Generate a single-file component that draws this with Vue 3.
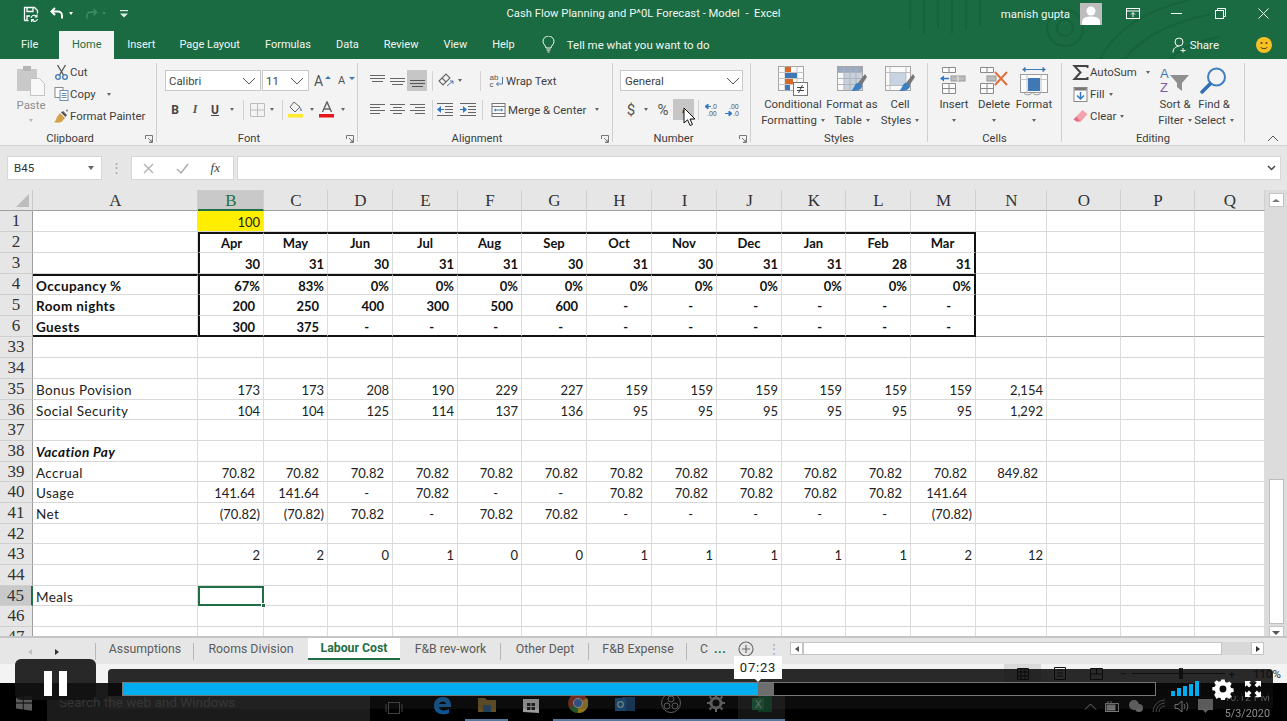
<script setup>
const cols = ['A','B','C','D','E','F','G','H','I','J','K','L','M','N','O','P','Q']
const months = ['Apr','May','Jun','Jul','Aug','Sep','Oct','Nov','Dec','Jan','Feb','Mar']
const days = [30,31,30,31,31,30,31,30,31,31,28,31].map(String)
const pct = ['67%','83%','0%','0%','0%','0%','0%','0%','0%','0%','0%','0%']
const d = '-'
const v = '70.82', w = '141.64', n = '(70.82)'

const rowsRaw = [
  { n: 1, vals: ['100'], plain: true },
  { n: 2, vals: months, center: true, bold: true },
  { n: 3, vals: days, plain: true, bold: true },
  { n: 4, a: 'Occupancy %', vals: pct, plain: true, bold: true },
  { n: 5, a: 'Room nights', vals: ['200','250','400','300','500','600',d,d,d,d,d,d], bold: true },
  { n: 6, a: 'Guests', vals: ['300','375',d,d,d,d,d,d,d,d,d,d], bold: true },
  { n: 33, vals: [] },
  { n: 34, vals: [] },
  { n: 35, a: 'Bonus Povision', vals: ['173','173','208','190','229','227','159','159','159','159','159','159','2,154'], plain: true },
  { n: 36, a: 'Social Security', vals: ['104','104','125','114','137','136','95','95','95','95','95','95','1,292'], plain: true },
  { n: 37, vals: [] },
  { n: 38, a: 'Vacation Pay', aClass: 'bi', vals: [] },
  { n: 39, a: 'Accrual', vals: [v,v,v,v,v,v,v,v,v,v,v,v,'849.82'] },
  { n: 40, a: 'Usage', vals: [w,w,d,v,d,d,v,v,v,v,v,w] },
  { n: 41, a: 'Net', vals: [n,n,v,d,v,v,d,d,d,d,d,n] },
  { n: 42, vals: [] },
  { n: 43, vals: ['2','2','0','1','0','0','1','1','1','1','1','2','12'], plain: true },
  { n: 44, vals: [] },
  { n: 45, a: 'Meals', vals: [] },
  { n: 46, vals: [] },
  { n: 47, vals: [] },
]

function cellClass(row, ci) {
  const out = []
  const val = ci > 0 ? row.vals[ci - 1] : undefined
  if (ci === 0) {
    out.push('txt')
    if (row.bold) out.push('b')
    if (row.aClass) out.push(row.aClass)
  } else if (val !== undefined) {
    if (row.bold) out.push('b')
    if (row.center) out.push('ctr')
    else if (row.plain) out.push('rgt')
    else if (val === d) out.push('rgt', 'dash')
    else if (val.startsWith('(')) out.push('rgt')
    else out.push('rgt', 'acc')
  }
  const inBox = ci >= 1 && ci <= 12
  if (row.n === 2 && inBox) out.push('tt')
  if (row.n === 4 && ci <= 12) out.push('tt')
  if (row.n === 6 && ci <= 12) out.push('tb')
  if (row.n === 6 && ci > 12) out.push('gb')
  if (row.n >= 2 && row.n <= 6 && ci === 1) out.push('tl')
  if (row.n >= 2 && row.n <= 6 && ci === 12) out.push('tr')
  if (row.n === 1 && ci === 1) out.push('yellow')
  if (row.n === 45 && ci === 1) out.push('sel')
  return out
}

const rows = rowsRaw.map(r => ({
  n: r.n,
  active: r.n === 45,
  cells: cols.map((c, i) => ({
    key: c,
    text: i === 0 ? (r.a || '') : (r.vals[i - 1] || ''),
    cls: cellClass(r, i),
  })),
}))

const sheetTabs = [
  { label: 'Assumptions', w: 'tw-a' },
  { label: 'Rooms Division', w: 'tw-b' },
  { label: 'Labour Cost', w: 'tw-c', on: true },
  { label: 'F&B rev-work', w: 'tw-d' },
  { label: 'Other Dept', w: 'tw-e' },
  { label: 'F&B Expense', w: 'tw-a' },
]
const ribbonTabs = [
  ['File','t-file'],['Home','t-home'],['Insert','t-ins'],['Page Layout','t-pl'],['Formulas','t-for'],
  ['Data','t-dat'],['Review','t-rev'],['View','t-vie'],['Help','t-hel'],
]
const taskSlots = [
  { id: 'view', w: 48 }, { id: 'edge', w: 47 }, { id: 'files', w: 43, run: true }, { id: 'store', w: 45 },
  { id: 'chrome', w: 49, run: true }, { id: 'outlook', w: 46, run: true }, { id: 'obs', w: 45, run: true },
  { id: 'gear', w: 45, run: true }, { id: 'excel', w: 47, run: true, hot: true },
]
const bars = [5, 8, 10, 12.5, 15]
</script>

<template>
  <div class="app">
    <div class="window">
      <div class="head">
        <svg class="swirl" width="340" height="59" viewBox="0 0 340 59" fill="none" stroke="#17623c" stroke-width="2">
          <circle cx="165" cy="28" r="18"/><circle cx="165" cy="28" r="8"/>
          <path d="M200 59C215 30 245 10 290 0M225 59c15-20 40-35 85-45M270 59c10-10 25-18 50-22"/>
          <path d="M10 0v30M24 0v34M38 0v28M52 0v34M66 0v30M80 0v26"/>
        </svg>
        <header class="titlebar">
          <div class="qat">
            <svg class="qi-save" width="16" height="16" viewBox="0 0 16 16" fill="none" stroke="#fff" stroke-width="1.3"><path d="M1.5 14.5v-13h10l3 3v3"/><path d="M4 1.5v4h6v-4M1.5 14.5h4M4 14v-4h3"/><path d="M8 12a3 3 0 0 1 5-2l1 1m0-2.5V11h-2.4M14.5 13a3 3 0 0 1-5 1.500l-1-1m0 2.400v-2.400H11" stroke-width="1.100"/></svg>
            <svg class="qi-undo" width="14" height="13" viewBox="0 0 14 13" fill="none" stroke="#fff" stroke-width="2"><path d="M5 1 1.500 4.500 5 8"/><path d="M2 4.500h6a4 4 0 0 1 4 4v3"/></svg>
            <i class="caret white qc1"></i>
            <svg class="qi-redo" width="13" height="12" viewBox="0 0 14 13" fill="none" stroke="#3f8a66" stroke-width="1.700"><path d="M9 1l3.500 3.500L9 8"/><path d="M12 4.500H6a4 4 0 0 0-4 4v3"/></svg>
            <i class="caret dim qc2"></i>
            <svg class="qi-cust" width="10" height="8" viewBox="0 0 10 8" fill="#dfeee6"><rect x="1" y="0" width="8" height="1.200"/><path d="M1 3.500h8L5 7.500z"/></svg>
          </div>
          <div class="doc-title">Cash Flow Planning and P^0L Forecast - Model&nbsp; -&nbsp; Excel</div>
          <div class="win-right">
            <span class="user">manish gupta</span>
            <span class="avatar">
              <svg width="22" height="22" viewBox="0 0 22 22" fill="#fff"><circle cx="11" cy="8" r="4.500"/><path d="M2 22v-3c0-4 4-5.500 9-5.500s9 1.500 9 5.500v3z"/></svg>
            </span>
            <svg class="wc wc1" width="14" height="12" viewBox="0 0 14 12" fill="none" stroke="#fff"><rect x=".5" y=".5" width="13" height="10"/><path d="M.5 3h13M7 9V5M5 6.500 7 4.500l2 2"/></svg>
            <svg class="wc wc2" width="11" height="11" viewBox="0 0 11 11" stroke="#fff"><path d="M0 5.500h11"/></svg>
            <svg class="wc wc3" width="11" height="11" viewBox="0 0 11 11" fill="none" stroke="#fff"><rect x=".5" y="2.500" width="8" height="8"/><path d="M2.500 2.500v-2h8v8h-2"/></svg>
            <svg class="wc wc4" width="11" height="11" viewBox="0 0 11 11" stroke="#fff"><path d="M.5.5l10 10M10.500.5l-10 10"/></svg>
          </div>
        </header>

        <nav class="tabs">
          <span v-for="t in ribbonTabs" :key="t[0]" class="tab" :class="t[1]">{{ t[0] }}</span>
          <svg class="bulb" width="13" height="17" viewBox="0 0 13 17" fill="none" stroke="#fff"><path d="M4 12c0-2.500-3-3.500-3-6.500a5.500 5.500 0 0 1 11 0C12 8.500 9 9.500 9 12z"/><path d="M4.500 14h4M5.500 16h2"/></svg>
          <span class="tell">Tell me what you want to do</span>
          <span class="share">
            <svg width="15" height="16" viewBox="0 0 15 16" fill="none" stroke="#fff"><circle cx="7" cy="5" r="4"/><path d="M1 15.500c0-4 2.500-6 5.500-6M11 11v4.500M8.500 13.500h5"/></svg>
            Share
          </span>
          <span class="smiley">
            <svg width="16" height="16" viewBox="0 0 16 16"><circle cx="8" cy="8" r="8" fill="#f6c125"/><circle cx="5.500" cy="6" r="1.100" fill="#5a4510"/><circle cx="10.500" cy="6" r="1.100" fill="#5a4510"/><path d="M4.500 10c1.500 2.200 5.500 2.200 7 0" fill="none" stroke="#5a4510"/></svg>
          </span>
        </nav>
      </div>

      <section class="ribbon">
        <!-- Clipboard -->
        <div class="group g-clip">
          <div class="gbody">
            <div class="paste">
              <svg width="28" height="30" viewBox="0 0 28 30"><rect x="0" y="3" width="20" height="22" fill="#c9c9c9"/><rect x="6" y="0" width="8" height="5" fill="#b5b5b5"/><path d="M13.500 12.500h9l5 5v12h-14z" fill="#f8f8f8" stroke="#c4c4c4"/></svg>
              <span class="paste-l">Paste</span>
              <i class="caret soft"></i>
            </div>
            <div class="smalls">
              <div class="small">
                <svg width="14" height="16" viewBox="0 0 14 16" fill="none"><path d="M3 1l6 10M11 1 5 11" stroke="#555" stroke-width="1.300"/><circle cx="3.500" cy="13" r="2.300" stroke="#3f78b5" stroke-width="1.300"/><circle cx="10.500" cy="13" r="2.300" stroke="#3f78b5" stroke-width="1.300"/></svg>
                <span>Cut</span>
              </div>
              <div class="small">
                <svg width="14" height="14" viewBox="0 0 14 14" fill="#fff" stroke="#8a8a8a"><rect x=".5" y=".5" width="8" height="10"/><rect x="5.500" y="3.500" width="8" height="10" stroke="#6b8fb5"/><path d="M7 6.500h5M7 8.500h5M7 10.500h5" stroke="#6b8fb5"/></svg>
                <span>Copy</span><i class="caret ml-copy"></i>
              </div>
              <div class="small">
                <svg width="15" height="14" viewBox="0 0 15 14"><path d="M6 4l5 5-3 3.500C6 14 2 14 0 13c2-1 2-3 3-5z" fill="#d2a24d"/><path d="M7 3.500l2-1.500 4 4-1.500 2z" fill="#555"/><circle cx="13" cy="1.500" r="1" fill="#777"/></svg>
                <span>Format Painter</span>
              </div>
            </div>
          </div>
          <div class="glabel off">Clipboard<svg class="launch" width="8" height="8" viewBox="0 0 8 8" fill="none" stroke="#777"><path d="M.5 4V.5h7v7H4M3 3l4 4M7 4.500V7H4.500"/></svg></div>
        </div>
        <i class="vsep"></i>

        <!-- Font -->
        <div class="group g-font">
          <div class="gbody col">
            <div class="rowline">
              <div class="combo c-font"><span>Calibri</span><svg width="14" height="8" viewBox="0 0 14 8" fill="none" stroke="#555"><path d="M1 1l6 6 6-6"/></svg></div>
              <div class="combo c-size"><span>11</span><svg width="14" height="8" viewBox="0 0 14 8" fill="none" stroke="#555"><path d="M1 1l6 6 6-6"/></svg></div>
              <span class="grow-a">A<i class="tri up"></i></span>
              <span class="shrink-a">A<i class="tri dn"></i></span>
            </div>
            <div class="rowline r2">
              <span class="slot s20 fb">B</span>
              <span class="slot s20 fi">I</span>
              <span class="slot s20 fu">U</span>
              <span class="slot s13"><i class="caret"></i></span>
              <i class="msep m5"></i>
              <span class="slot s20 mlx3">
                <svg width="15" height="14" viewBox="0 0 15 14" fill="none" stroke="#bdbdbd"><path d="M.5.5h14v13H.5zM7.500.5v13M.5 7h14"/></svg>
              </span>
              <span class="slot s10"><i class="caret"></i></span>
              <i class="msep m5"></i>
              <span class="slot s20 mlx3">
                <svg width="16" height="17" viewBox="0 0 16 17"><path d="M6 1l6 5-5 5-5-5z" fill="#f3f3f3" stroke="#666"/><path d="M12 6c2 2 2.500 3.500 1.500 4-1 .5-2-.5-1.500-4" fill="#7a94c4"/><rect x="0" y="13" width="15" height="3.500" fill="#ffe92b"/></svg>
              </span>
              <span class="slot s11"><i class="caret"></i></span>
              <span class="slot s20">
                <svg width="16" height="17" viewBox="0 0 16 17"><path d="M3.500 11 8 1l4.500 10M5 8h6" fill="none" stroke="#666" stroke-width="1.500"/><rect x="0" y="13" width="15" height="3.500" fill="#e8141c"/></svg>
              </span>
              <span class="slot s11"><i class="caret"></i></span>
            </div>
          </div>
          <div class="glabel off">Font<svg class="launch" width="8" height="8" viewBox="0 0 8 8" fill="none" stroke="#777"><path d="M.5 4V.5h7v7H4M3 3l4 4M7 4.500V7H4.500"/></svg></div>
        </div>
        <i class="vsep"></i>

        <!-- Alignment -->
        <div class="group g-align">
          <div class="gbody col">
            <div class="rowline">
              <span class="slot s20 first">
                <svg width="15" height="12" viewBox="0 0 15 12" stroke="#666"><path d="M0 .5h15M0 3.500h15M2 6.500h11"/></svg>
              </span>
              <span class="slot s20">
                <svg width="15" height="12" viewBox="0 0 15 12" stroke="#666"><path d="M0 3.500h15M0 6.500h15M2 9.500h11"/></svg>
              </span>
              <span class="slot s20 hot">
                <svg width="15" height="12" viewBox="0 0 15 12" stroke="#555"><path d="M0 5.500h15M0 8.500h15M2 11.500h11"/></svg>
              </span>
              <i class="msep m5"></i>
              <span class="slot s20 mlx3">
                <svg width="18" height="15" viewBox="0 0 18 15" fill="none" stroke="#666"><path d="M2 8 9 1l4 4-7 7zM5 5l4 4" stroke-width="1.100"/><path d="M10 13l6-5m-3 0h3v3" stroke="#4d78ad"/></svg>
              </span>
              <span class="slot s10 shiftl"><i class="caret"></i></span>
              <i class="msep wrapgap"></i>
              <div class="small inl">
                <svg width="14" height="15" viewBox="0 0 14 15"><text x="0" y="7" font-size="8" fill="#555" font-family="Liberation Sans, sans-serif">ab</text><text x="0" y="14" font-size="8" fill="#555" font-family="Liberation Sans, sans-serif">c</text><path d="M13 4v7H7l2-2m-2 2 2 2" fill="none" stroke="#4d78ad"/></svg>
                <span>Wrap Text</span>
              </div>
            </div>
            <div class="rowline r2">
              <span class="slot s20 first">
                <svg width="15" height="12" viewBox="0 0 15 12" stroke="#666"><path d="M0 .5h15M0 3.500h10M0 6.500h15M0 9.500h10"/></svg>
              </span>
              <span class="slot s20">
                <svg width="15" height="12" viewBox="0 0 15 12" stroke="#666"><path d="M0 .5h15M3 3.500h9M0 6.500h15M3 9.500h9"/></svg>
              </span>
              <span class="slot s20">
                <svg width="15" height="12" viewBox="0 0 15 12" stroke="#666"><path d="M0 .5h15M5 3.500h10M0 6.500h15M5 9.500h10"/></svg>
              </span>
              <i class="msep m5"></i>
              <span class="slot s20 mlx2">
                <svg width="16" height="13" viewBox="0 0 16 13" stroke="#666"><path d="M0 .5h16M8 3.500h8M8 6.500h8M8 9.500h8M0 12.500h16"/><path d="M0 6.500 4 3v7z" fill="#2f77c8" stroke="none"/><path d="M3 6.500h4" stroke="#2f77c8"/></svg>
              </span>
              <span class="slot s20 mlx3">
                <svg width="16" height="13" viewBox="0 0 16 13" stroke="#666"><path d="M0 .5h16M8 3.500h8M8 6.500h8M8 9.500h8M0 12.500h16"/><path d="M7 6.500 3 3v7z" fill="#2f77c8" stroke="none"/><path d="M0 6.500h4" stroke="#2f77c8"/></svg>
              </span>
              <i class="msep mergegap"></i>
              <div class="small inl">
                <svg width="14" height="14" viewBox="0 0 14 14" fill="#fbfbfb" stroke="#777"><rect x=".5" y=".5" width="13" height="13"/><path d="M.5 3.500h13M.5 10.500h13"/><path d="M3 7h8M3 7l1.500-1.200M3 7l1.500 1.200M11 7 9.500 5.800M11 7 9.500 8.200" stroke="#3f78b5"/></svg>
                <span>Merge &amp; Center</span><i class="caret ml-merge"></i>
              </div>
            </div>
          </div>
          <div class="glabel off">Alignment<svg class="launch" width="8" height="8" viewBox="0 0 8 8" fill="none" stroke="#777"><path d="M.5 4V.5h7v7H4M3 3l4 4M7 4.500V7H4.500"/></svg></div>
        </div>
        <i class="vsep"></i>

        <!-- Number -->
        <div class="group g-num">
          <div class="gbody col">
            <div class="rowline">
              <div class="combo c-gen"><span>General</span><svg width="14" height="8" viewBox="0 0 14 8" fill="none" stroke="#555"><path d="M1 1l6 6 6-6"/></svg></div>
            </div>
            <div class="rowline r2">
              <span class="slot s20 n1 big">$</span>
              <span class="slot s10"><i class="caret"></i></span>
              <span class="slot s20 n2 big">%</span>
              <span class="slot s21 hot comma">,</span>
              <i class="msep m4"></i>
              <span class="slot s20 n3">
                <svg width="15" height="14" viewBox="0 0 15 14"><path d="M0 3.500 3 1v5zM3 3.500h3" fill="#2f77c8" stroke="#2f77c8"/><text x="6" y="6" font-size="7" fill="#555" font-family="Liberation Sans, sans-serif">.0</text><text x="2" y="13" font-size="7" fill="#555" font-family="Liberation Sans, sans-serif">.00</text></svg>
              </span>
              <span class="slot s21">
                <svg width="15" height="14" viewBox="0 0 15 14"><text x="4" y="6" font-size="7" fill="#555" font-family="Liberation Sans, sans-serif">.00</text><path d="M0 10.500h4M7 10.500l-3-2.500v5z" fill="#2f77c8" stroke="#2f77c8"/><text x="8" y="13" font-size="7" fill="#555" font-family="Liberation Sans, sans-serif">.0</text></svg>
              </span>
            </div>
          </div>
          <div class="glabel off">Number<svg class="launch" width="8" height="8" viewBox="0 0 8 8" fill="none" stroke="#777"><path d="M.5 4V.5h7v7H4M3 3l4 4M7 4.500V7H4.500"/></svg></div>
        </div>
        <i class="vsep"></i>

        <!-- Styles -->
        <div class="group g-styles">
          <div class="gbody">
            <div class="bigbtn b-cf">
              <svg width="30" height="30" viewBox="0 0 30 30" fill="none"><rect x=".5" y=".5" width="25" height="24" fill="#fafafa" stroke="#a5a5a5"/><path d="M.5 6.500h25M.5 12.500h25M.5 18.500h25M7 .5v24M19 .5v24" stroke="#c4c4c4"/><rect x="7" y="1" width="6" height="5" fill="#d8672a"/><rect x="7" y="7" width="12" height="5" fill="#3f78b5"/><rect x="7" y="13" width="8" height="5" fill="#d8672a"/><rect x="7" y="19" width="5" height="5" fill="#3f78b5"/><rect x="15.500" y="16.500" width="14" height="13" fill="#fff" stroke="#777"/><path d="M19 21.500h7M19 24.500h7M24.500 19l-4 8" stroke="#444"/></svg>
              <span>Conditional</span><span>Formatting<i class="caret ml3"></i></span>
            </div>
            <div class="bigbtn b-ft">
              <svg width="30" height="30" viewBox="0 0 30 30" fill="none"><rect x=".5" y=".5" width="25" height="24" fill="#fafafa" stroke="#a5a5a5"/><rect x="1" y="1" width="24" height="5" fill="#9aa9bd"/><rect x="7" y="6" width="18" height="18" fill="#c7d0db"/><path d="M.5 6.500h25M.5 12.500h25M.5 18.500h25M7 .5v24M13 .5v24M19 .5v24" stroke="#aeb4bb"/><path d="M28 8 21 17l3 3 6-9z" fill="#777"/><path d="M20 17c3-.5 5 1 5 3.500-1 3.500-6 5-11 4.500 3-2 3-6 6-8z" fill="#3f7fc0"/></svg>
              <span>Format as</span><span>Table<i class="caret ml3"></i></span>
            </div>
            <div class="bigbtn b-cs">
              <svg width="30" height="30" viewBox="0 0 30 30" fill="none"><rect x=".5" y=".5" width="25" height="24" fill="#fafafa" stroke="#a5a5a5"/><rect x="5" y="7" width="16" height="12" fill="#c5d3e2"/><path d="M.5 6.500h25M5 .5v24M21 .5v24M.5 19.500h25" stroke="#bdbdbd"/><path d="M28 8 21 17l3 3 6-9z" fill="#777"/><path d="M20 17c3-.5 5 1 5 3.500-1 3.500-6 5-11 4.500 3-2 3-6 6-8z" fill="#3f7fc0"/></svg>
              <span>Cell</span><span>Styles<i class="caret ml3"></i></span>
            </div>
          </div>
          <div class="glabel">Styles</div>
        </div>
        <i class="vsep"></i>

        <!-- Cells -->
        <div class="group g-cells">
          <div class="gbody">
            <div class="bigbtn b-cell">
              <svg width="30" height="30" viewBox="0 0 30 30" fill="none"><path d="M3.500 1.500h13v5h-13zM10 1.500v5M3.500 17.500h13v10h-13zM3.500 22.500h13M10 17.500v10" stroke="#8a8a8a" fill="#fbfbfb"/><rect x="12" y="10" width="14" height="5" fill="#bcbcbc" stroke="#999"/><path d="M19 10v5" stroke="#eee"/><path d="M2 12.500h8" stroke="#2f77c8" stroke-width="1.500"/><path d="M1 12.500 5 9.500v6z" fill="#2f77c8"/></svg>
              <span>Insert</span><i class="caret top5"></i>
            </div>
            <div class="bigbtn b-cell">
              <svg width="30" height="30" viewBox="0 0 30 30" fill="none"><path d="M1.500 1.500h13v5h-13zM8 1.500v5M1.500 17.500h13v10h-13zM1.500 22.500h13M8 17.500v10" stroke="#8a8a8a" fill="#fbfbfb"/><rect x="8" y="10" width="9" height="5" fill="#bcbcbc" stroke="#999"/><path d="M16 6l12 13M28 6 16 19" stroke="#e0703a" stroke-width="2"/></svg>
              <span>Delete</span><i class="caret top5"></i>
            </div>
            <div class="bigbtn b-cell">
              <svg width="30" height="30" viewBox="0 0 30 30" fill="none"><path d="M6 3.500h18M6 1v5M24 1v5" stroke="#3f78b5"/><path d="M3 3.500 6 1.500v4zM27 3.500 24 1.500v4z" fill="#3f78b5"/><rect x="1.500" y="8.500" width="27" height="18" fill="#fbfbfb" stroke="#9a9a9a"/><path d="M1.500 13.500h27M8 8.500v18M22 8.500v18" stroke="#c4c4c4"/><rect x="9" y="12" width="12" height="13" fill="#3f78b5"/><path d="M5 26.500c0 3 7 3 8 0M14 26.500c0 3 7 3 8 0" stroke="#9a9a9a"/></svg>
              <span>Format</span><i class="caret top5"></i>
            </div>
          </div>
          <div class="glabel">Cells</div>
        </div>
        <i class="vsep"></i>

        <!-- Editing -->
        <div class="group g-edit">
          <div class="gbody">
            <div class="smalls edit-col">
              <div class="small">
                <svg width="16" height="15" viewBox="0 0 16 15" fill="none" stroke="#444" stroke-width="2"><path d="M15 3V1H2l6 6.500L2 14h13v-2"/></svg>
                <span>AutoSum</span><i class="caret ml-auto"></i>
              </div>
              <div class="small">
                <svg width="14" height="15" viewBox="0 0 14 15" fill="#fff" stroke="#888"><rect x=".5" y=".5" width="13" height="14"/><rect x="1" y="1" width="12" height="2.500" fill="#777" stroke="none"/><path d="M7 5v7M3.500 8.500 7 12l3.500-3.500" stroke="#2f77c8" fill="none" stroke-width="1.500"/></svg>
                <span>Fill</span><i class="caret ml3"></i>
              </div>
              <div class="small">
                <svg width="14" height="13" viewBox="0 0 14 13"><path d="M9 0l5 4-7 8H3L0 9.500z" fill="#f2a3ad"/><path d="M3 6.500 6.500 11H3L0 9.500z" fill="#e56d84"/></svg>
                <span>Clear</span><i class="caret ml3"></i>
              </div>
            </div>
            <div class="bigbtn b-sort">
              <svg width="30" height="30" viewBox="0 0 30 30"><text x="0" y="12" font-size="13" fill="#3f78b5" font-family="Liberation Sans, sans-serif">A</text><text x="0" y="26" font-size="13" fill="#7a5ba6" font-family="Liberation Sans, sans-serif">Z</text><path d="M10 9h19l-7 8v8l-5-4v-4z" fill="#8f8f8f"/></svg>
              <span>Sort &amp;</span><span>Filter<i class="caret ml3"></i></span>
            </div>
            <div class="bigbtn b-find">
              <svg width="30" height="30" viewBox="0 0 30 30" fill="none"><circle cx="17.500" cy="11" r="8.500" stroke="#3f7fc0" stroke-width="2"/><path d="M11 18 3 26" stroke="#2f6fb5" stroke-width="3.500" stroke-linecap="round"/></svg>
              <span>Find &amp;</span><span>Select<i class="caret ml3"></i></span>
            </div>
          </div>
          <div class="glabel">Editing</div>
        </div>
        <i class="vsep"></i>
        <div class="collapse">
          <svg width="12" height="7" viewBox="0 0 12 7" fill="none" stroke="#555"><path d="M1 6l5-5 5 5"/></svg>
        </div>
      </section>

      <div class="formula">
        <div class="namebox"><span>B45</span><i class="caret dark"></i></div>
        <span class="fdots">⋮</span>
        <div class="fbtns">
          <svg width="11" height="11" viewBox="0 0 11 11" stroke="#b0b0b0" stroke-width="1.300"><path d="M1 1l9 9M10 1l-9 9"/></svg>
          <svg width="13" height="11" viewBox="0 0 13 11" fill="none" stroke="#b0b0b0" stroke-width="1.500"><path d="M1 6l4 4 7-9"/></svg>
          <span class="fx">fx</span>
        </div>
        <div class="finput">
          <svg width="9" height="6" viewBox="0 0 9 6" fill="none" stroke="#444" stroke-width="1.500"><path d="M1 1l3.500 3.500L8 1"/></svg>
        </div>
      </div>

      <div class="sheet">
        <div class="grid">
          <div class="corner"><i></i></div>
          <div v-for="c in cols" :key="c" class="colh" :class="{ on: c === 'B' }">{{ c }}</div>
          <template v-for="r in rows" :key="r.n">
            <div class="rowh" :class="{ on: r.active }">{{ r.n }}</div>
            <div v-for="cell in r.cells" :key="cell.key" class="cell" :class="cell.cls">{{ cell.text }}</div>
          </template>
        </div>
        <aside class="vscroll">
          <span class="sbtn"><i class="tri up gr"></i></span>
          <span class="thumb"></span>
          <span class="sbtn"><i class="tri dn dk"></i></span>
        </aside>
      </div>

      <div class="sheettabs">
        <div class="navarrows"><i class="tri lf lite"></i><i class="tri rt dk"></i></div>
        <div v-for="t in sheetTabs" :key="t.label" class="stab" :class="[t.w, { on: t.on }]">{{ t.label }}</div>
        <div class="stab-more"><span>C</span><b>...</b></div>
        <svg class="plus" width="16" height="16" viewBox="0 0 16 16" fill="none" stroke="#6c6c6c" stroke-width="1.200"><circle cx="8" cy="8" r="7"/><path d="M8 4v8M4 8h8"/></svg>
        <span class="tdots">⋮</span>
        <div class="hscroll">
          <span class="hbtn"><i class="tri lf dk"></i></span>
          <span class="hthumb"></span>
          <span class="hbtn hr"><i class="tri rt dk"></i></span>
        </div>
      </div>

      <footer class="status">
        <span class="sv on"><svg width="12" height="12" viewBox="0 0 12 12" fill="none" stroke="#111"><path d="M.5.500h11v11H.5zM.5 4h11M.5 8h11M4 .5v11M8 .5v11"/></svg></span>
        <span class="sv"><svg width="12" height="13" viewBox="0 0 12 13" fill="none" stroke="#111"><path d="M.5.500h11v12H.5zM3 3h6M3 6h6M3 9h6"/></svg></span>
        <span class="sv"><svg width="13" height="12" viewBox="0 0 13 12" fill="none" stroke="#111"><path d="M.5.500h12v11H.5zM.5 6h12M6.500.5V6"/></svg></span>
        <span class="zoomm">−</span>
        <span class="slider"><i></i></span>
        <span class="zoomp">+</span>
        <span class="zoomv">110%</span>
      </footer>

      <div class="taskbar">
        <svg class="winlogo" width="16" height="16" viewBox="0 0 16 16" fill="#5b5b5b"><path d="M0 2.500 6.800 1.600v6H0zM7.600 1.500 16 .3v7.300H7.600zM0 8.400h6.800v6L0 13.500zM7.600 8.400H16v7.300l-8.400-1.200z"/></svg>
        <div class="search">Search the web and Windows</div>
        <div v-for="s in taskSlots" :key="s.id" class="tslot" :class="{ run: s.run, hot: s.hot }" :style="{ width: s.w + 'px' }">
          <svg v-if="s.id === 'view'" width="20" height="14" viewBox="0 0 20 14" fill="none" stroke="#5a5a5a"><rect x="4.500" y="1.500" width="11" height="11"/><path d="M2 3v8M18 3v8"/></svg>
          <svg v-else-if="s.id === 'edge'" width="20" height="20" viewBox="0 0 20 20"><path d="M2 11C2 5 6 2 11 2c5 0 8 3.500 8 8v2H7c.5 3.500 5 4.500 10 2v4c-7 3-15 .5-15-7zM7 9h7c0-3.500-6-3.500-7 0z" fill="#1477c9"/></svg>
          <svg v-else-if="s.id === 'files'" width="20" height="18" viewBox="0 0 20 18"><path d="M1 3h7l2 2h9v12H1z" fill="#8b6d2e"/><rect x="6" y="10" width="8" height="7" fill="#2c5a85"/></svg>
          <svg v-else-if="s.id === 'store'" width="20" height="20" viewBox="0 0 20 20"><path d="M2 4h16v14l-16-1z" fill="#d8d8d8"/><path d="M6 8h3.500v3H6zM10.500 8H14v3h-3.500zM6 12h3.500v3H6zM10.500 12H14v3h-3.500z" fill="#222"/></svg>
          <svg v-else-if="s.id === 'chrome'" width="20" height="20" viewBox="0 0 20 20"><circle cx="10" cy="10" r="10" fill="#a63a2c"/><path d="M10 10 1.500 15A10 10 0 0 0 10 20z" fill="#2d7a3e"/><path d="M10 10v10A10 10 0 0 0 19 5z" fill="#c9a227"/><circle cx="10" cy="10" r="4.500" fill="#4275c4" stroke="#ddd"/></svg>
          <svg v-else-if="s.id === 'outlook'" width="20" height="18" viewBox="0 0 20 18"><rect x="7" y="2" width="13" height="14" fill="#174a7c"/><rect x="0" y="3" width="11" height="13" fill="#1f5f9c"/><circle cx="5.500" cy="9.500" r="2.800" fill="none" stroke="#9cc" stroke-width="1.300"/></svg>
          <svg v-else-if="s.id === 'obs'" width="20" height="20" viewBox="0 0 20 20" fill="none" stroke="#8a8a8a"><circle cx="10" cy="10" r="9.500"/><circle cx="10" cy="6" r="3"/><circle cx="6" cy="13" r="3"/><circle cx="14" cy="13" r="3"/></svg>
          <svg v-else-if="s.id === 'gear'" width="20" height="20" viewBox="0 0 20 20" fill="none" stroke="#8d8d8d" stroke-width="3"><circle cx="10" cy="10" r="5"/><path d="M10 1v3M10 16v3M1 10h3M16 10h3M3.500 3.500l2 2M14.500 14.500l2 2M3.500 16.500l2-2M14.500 5.500l2-2" stroke-width="2"/></svg>
          <svg v-else width="20" height="18" viewBox="0 0 20 18"><rect x="6" y="1" width="14" height="16" fill="#14512f"/><rect x="0" y="3" width="12" height="12" fill="#1d6b40"/><text x="3" y="13" font-size="10" fill="#9dbba9" font-family="Liberation Sans, sans-serif">X</text></svg>
        </div>
        <div class="tray">
          <svg width="13" height="7" viewBox="0 0 13 7" fill="none" stroke="#7c7c7c"><path d="M1 6.500 6.500 1 12 6.500"/></svg>
          <svg width="15" height="11" viewBox="0 0 15 11" fill="none" stroke="#777"><rect x=".5" y="2.500" width="13" height="8"/><rect x="2" y="4" width="8" height="5" fill="#777"/><path d="M3 2V0M6 2V0"/></svg>
          <svg width="16" height="14" viewBox="0 0 16 14" fill="#666"><circle cx="6" cy="6" r="5"/><circle cx="11" cy="9" r="4"/></svg>
          <svg width="14" height="14" viewBox="0 0 14 14" fill="none" stroke="#4b4b4b"><path d="M1 13a12 12 0 0 1 12-12M4 13a9 9 0 0 1 9-9M7 13a6 6 0 0 1 6-6"/></svg>
          <svg width="16" height="13" viewBox="0 0 16 13" fill="none" stroke="#7c7c7c"><path d="M1 4.500h3l4-3.500v11L4 8.500H1zM10 4c1 1.500 1 3.500 0 5M12.500 2.500c1.700 2.500 1.700 5.500 0 8"/></svg>
          <svg width="15" height="15" viewBox="0 0 15 15" fill="#636363"><path d="M0 0h15v11h-5l-2.500 3L5 11H0z"/></svg>
          <div class="clock"><span>10:12 PM</span><span>5/3/2020</span></div>
        </div>
      </div>
    </div>

    <!-- Video player overlay -->
    <div class="pausebox"><i></i><i></i></div>
    <div class="player">
      <div class="player-top"></div>
      <div class="track">
        <span class="played"></span>
        <span class="buffered"></span>
      </div>
    </div>
    <div class="tip">07:23</div>
    <div class="signal"><i v-for="(h, i) in bars" :key="i" :style="{ height: h + 'px' }"></i></div>
    <svg class="p-gear" width="22" height="22" viewBox="0 0 22 22"><path fill="#fff" fill-rule="evenodd" d="M9 0h4l.6 3 2.200.9 2.600-1.700 2.800 2.800-1.700 2.600.9 2.200 3 .6v4l-3 .6-.9 2.200 1.700 2.600-2.800 2.800-2.600-1.700-2.200.9-.6 3H9l-.6-3-2.200-.9-2.600 1.700L.8 17.800l1.700-2.600-.9-2.200-3-.6V9l3-.6.9-2.200L.8 3.600 3.600.8l2.600 1.700L8.400 2zM11 7a4 4 0 1 0 0 8 4 4 0 0 0 0-8z" transform="translate(1.500 1.500) scale(.86)"/></svg>
    <svg class="p-full" width="16" height="16" viewBox="0 0 16 16" fill="#fff"><path d="M0 0h6L4.200 1.800 6.500 4 4 6.500 1.800 4.200 0 6zM16 0v6l-1.800-1.800L12 6.500 9.500 4l2.300-2.200L10 0zM0 16v-6l1.800 1.800L4 9.500 6.500 12l-2.300 2.200L6 16zM16 16h-6l1.800-1.800L9.500 12 12 9.500l2.200 2.300L16 10z"/></svg>
    <svg class="cursor" width="13" height="20" viewBox="0 0 13 20"><path d="M1 1v15l3.500-3.200L7 18.500l2.500-1-2.500-5.500h5z" fill="#fff" stroke="#111"/></svg>
  </div>
</template>

<style scoped>
.app { position: relative; width: 1287px; height: 721px; overflow: hidden; font-family: Roboto, "Open Sans", sans-serif; }
.window { display: flex; flex-direction: column; width: 1287px; height: 721px; filter: blur(.35px); background: #e6e6e6; }
i { display: block; font-style: normal; }

/* title bar */
.head { position: relative; background: #1a6a42; flex: none; }
.swirl { position: absolute; left: 900px; top: 0; }
.titlebar { height: 30px; display: grid; grid-template-columns: 1fr auto 1fr; align-items: center; color: #fff; position: relative; padding-bottom: 3px; box-sizing: border-box; }
.qat { display: flex; align-items: center; padding-left: 23px; }
.qi-undo { margin-left: 11px; }
.qc1 { margin-left: 5px; }
.qi-redo { margin-left: 12px; }
.qc2 { margin-left: 4px; }
.qi-cust { margin-left: 13px; }
.doc-title { font-size: 11.250px; color: #eef6f1; white-space: nowrap; }
.win-right { display: flex; align-items: center; justify-content: flex-end; }
.user { font-size: 11.400px; color: #eef6f1; margin-right: 10px; }
.avatar { width: 22px; height: 22px; background: #bdbdbd; overflow: hidden; margin-right: 24px; margin-top: 0; }
.wc { flex: none; }
.wc2 { margin-left: 31px; }
.wc3 { margin-left: 33px; }
.wc4 { margin-left: 32px; margin-right: 18px; }

/* ribbon tabs */
.tabs { height: 29px; display: flex; align-items: center; color: #f1f7f3; font-size: 11px; position: relative; }
.tab { white-space: nowrap; }
.t-file { margin-left: 21px; }
.t-home { margin-left: 21px; background: #f3f3f3; color: #1f6e45; width: 55px; height: 28px; margin-top: 1px; padding-bottom: 2px; box-sizing: border-box; display: flex; align-items: center; justify-content: center; }
.t-ins { margin-left: 13px; }
.t-pl { margin-left: 24px; }
.t-for { margin-left: 25px; }
.t-dat { margin-left: 25px; }
.t-rev { margin-left: 25px; }
.t-vie { margin-left: 25px; }
.t-hel { margin-left: 25px; }
.bulb { margin-left: 27px; }
.tell { margin-left: 12px; font-size: 11.500px; }
.share { margin-left: auto; display: flex; align-items: center; gap: 3px; margin-right: 37px; font-size: 11.500px; }
.smiley { display: flex; margin-right: 15px; }

/* ribbon */
.ribbon { height: 86px; background: #f3f3f3; border-bottom: 1px solid #d2d2d2; display: flex; flex: none; box-sizing: content-box; color: #444; font-size: 11.400px; }
.group { display: flex; flex-direction: column; flex: none; position: relative; }
.g-clip { width: 156px; }
.g-font { width: 200px; }
.g-align { width: 254px; }
.g-num { width: 137px; }
.g-styles { width: 176px; }
.g-cells { width: 133px; }
.g-edit { width: 182px; }
.vsep { width: 1px; background: #cfcfcf; margin: 4px 0 3px; flex: none; }
.gbody { flex: 1; display: flex; min-height: 0; }
.gbody.col { flex-direction: column; padding-top: 11px; }
.glabel { height: 14px; line-height: 16px; text-align: center; font-size: 11.200px; color: #3c3c3c; position: relative; }
.glabel.off { padding-right: 16px; }
.launch { position: absolute; right: 3px; top: 4px; }
.paste { margin-left: 16px; margin-top: 7px; width: 30px; display: flex; flex-direction: column; align-items: center; color: #8f8f8f; }
.paste-l { margin-top: 2px; line-height: 15px; }
.paste .caret { margin-top: 6px; }
.smalls { margin-left: 7px; padding-top: 2px; display: flex; flex-direction: column; }
.small { height: 22px; display: flex; align-items: center; white-space: nowrap; }
.small svg { flex: none; width: 17px; margin-right: 0; }
.small span { color: #3f3f3f; }
.inl svg { margin-right: 1px; }
.ml-copy { margin-left: 11px; }
.ml-merge { margin-left: 9px; }
.ml-auto { margin-left: 9px; }
.ml3 { margin-left: 4px; display: inline-block; vertical-align: middle; }
.edit-col { margin-left: 10px; width: 84px; flex: none; }
.edit-col .small svg { margin-right: 1px; }

.caret { width: 0; height: 0; border-left: 2.500px solid transparent; border-right: 2.500px solid transparent; border-top: 3px solid #666; }
.caret.white { border-top-color: #fff; }
.caret.dim { border-top-color: #3f8a66; }
.caret.soft { border-top-color: #b5b5b5; }
.caret.dark { border-top-color: #666; border-left-width: 3.500px; border-right-width: 3.500px; border-top-width: 4px; }

.rowline { display: flex; align-items: center; height: 21px; }
.r2 { margin-top: 8px; }
.g-font .rowline { padding-left: 8px; }
.combo { height: 21px; background: #fff; border: 1px solid #c9c9c9; box-sizing: border-box; display: flex; align-items: center; justify-content: space-between; padding: 0 4px 0 3px; font-size: 11.400px; flex: none; }
.c-font { width: 96px; }
.c-size { width: 47px; margin-left: 1px; }
.c-gen { width: 123px; margin-left: 7px; padding-left: 4px; padding-right: 2px; }
.grow-a { margin-left: 5px; font-size: 14px; color: #555; position: relative; width: 21px; }
.shrink-a { margin-left: 3px; font-size: 11px; color: #555; position: relative; width: 18px; }
.tri { width: 0; height: 0; }
.grow-a .tri, .shrink-a .tri { position: absolute; top: 3px; left: 11px; }
.tri.up { border-left: 3px solid transparent; border-right: 3px solid transparent; border-bottom: 3px solid #3f78b5; }
.tri.dn { border-left: 3px solid transparent; border-right: 3px solid transparent; border-top: 3px solid #3f78b5; }
.tri.up.gr { border-bottom-color: #777; border-left-width: 4px; border-right-width: 4px; }
.tri.dn.dk { border-top-color: #555; border-left-width: 4px; border-right-width: 4px; border-top-width: 4px; }
.tri.lf { border-top: 3.500px solid transparent; border-bottom: 3.500px solid transparent; border-right: 4px solid #555; }
.tri.rt { border-top: 3.500px solid transparent; border-bottom: 3.500px solid transparent; border-left: 4px solid #333; }
.tri.lite { border-right-color: #c2c2c2; }
.slot { display: flex; align-items: center; justify-content: center; height: 21px; flex: none; }
.s10 { width: 10px; } .s11 { width: 11px; } .s13 { width: 13px; } .s20 { width: 20px; } .s21 { width: 21px; }
.first { margin-left: 9px; }
.hot { background: #c6c6c6; }
.msep { width: 1px; height: 20px; background: #d2d2d2; flex: none; }
.m5 { margin-left: 5px; }
.m4 { margin-left: 4px; }
.mlx3 { margin-left: 3px; }
.mlx2 { margin-left: 2px; }
.n1 { margin-left: 8px; }
.n2 { margin-left: 2px; }
.n3 { margin-left: 3px; }
.shiftl { margin-left: -1px; }
.wrapgap { margin-left: 15px; margin-right: 7px; }
.mergegap { margin-left: 4px; margin-right: 7px; }
.inl { height: 21px; }
.fb { font: 700 12px Roboto, sans-serif; color: #444; }
.fi { font: italic 700 12px "Liberation Serif", serif; color: #555; }
.fu { font: 700 12px Roboto, sans-serif; color: #444; text-decoration: underline; }
.big { font-size: 15px; color: #555; }
.comma { font-weight: 700; color: #333; padding-bottom: 6px; box-sizing: border-box; }

.bigbtn { display: flex; flex-direction: column; align-items: center; flex: none; padding-top: 7px; line-height: 15.500px; white-space: nowrap; }
.bigbtn svg { margin-bottom: 1px; flex: none; }
.bigbtn span { display: block; color: #3f3f3f; }
.b-cf { margin-left: 9px; width: 66px; }
.b-ft { width: 52px; }
.b-cs { width: 44px; }
.b-cell { width: 40px; }
.g-cells .b-cell:first-child { margin-left: 6px; }
.b-sort { width: 38px; }
.b-find { width: 40px; }
.top5 { margin-top: 6px; }
.collapse { flex: 1; display: flex; justify-content: center; align-items: flex-end; padding-bottom: 3px; padding-left: 14px; }

/* formula bar */
.formula { height: 44px; box-sizing: border-box; padding: 10px 6px 10px 7px; display: flex; flex: none; background: #e6e6e6; }
.namebox { width: 95px; background: #fff; border: 1px solid #d6d6d6; box-sizing: border-box; display: flex; align-items: center; justify-content: space-between; padding: 0 7px 0 6px; font-size: 11.500px; color: #333; }
.fdots { width: 29px; text-align: center; color: #a8a8a8; font-size: 13px; line-height: 24px; }
.fbtns { width: 103px; background: #fff; border: 1px solid #d6d6d6; box-sizing: border-box; display: flex; align-items: center; justify-content: space-between; padding: 0 13px 0 11px; }
.fx { font: italic 13px "Liberation Serif", serif; color: #444; }
.finput { flex: 1; margin-left: 3px; background: #fff; border: 1px solid #d6d6d6; display: flex; align-items: center; justify-content: flex-end; padding-right: 4px; }

/* sheet */
.sheet { height: 446px; display: flex; flex: none; overflow: hidden; }
.grid { width: 1265px; display: grid; grid-template-columns: 33px 165px 66px 64px 65px 65px 64px 65px 65px 65px 65px 64px 65px 65px 71px 74px 74px 70px;
  grid-template-rows: 21px 21px 21px 21px 21px 21px 21px 21px 21px 21px 20px 21px 21px 20px 21px 21px 20px 21px 21px 20px 21px 21px; background: #fff; overflow: hidden; }
.corner { background: #e6e6e6; border-right: 1px solid #c8c8c8; border-bottom: 1px solid #9e9e9e; position: relative; }
.corner i { position: absolute; right: 3px; bottom: 3px; width: 0; height: 0; border-left: 13px solid transparent; border-bottom: 13px solid #bdbdbd; }
.colh { background: #e6e6e6; border-right: 1px solid #cfcfcf; border-bottom: 1px solid #9e9e9e; font: 17px/22px "Liberation Serif", serif; color: #333; text-align: center; box-sizing: border-box; padding-left: 1px; }
.colh.on { background: #c9c9c9; color: #1f6e45; border-bottom: 2px solid #1f6e45; }
.rowh { background: #e6e6e6; border-right: 1px solid #9e9e9e; border-bottom: 1px solid #cfcfcf; font: 17px/20px "Liberation Serif", serif; color: #333; text-align: center; box-sizing: border-box; }
.rowh.on { background: #c9c9c9; border-right: 2px solid #1f6e45; }
.cell { border-right: 1px solid #dcdcdc; border-bottom: 1px solid #d8d8d8; box-sizing: border-box; padding-top: 1px; font: 13px/20px Lato, "Open Sans", sans-serif; color: #222; white-space: nowrap; overflow: hidden; position: relative; }
.txt { padding-left: 3px; font-size: 13.500px; letter-spacing: .4px; }
.rgt { text-align: right; padding-right: 3px; }
.acc { padding-right: 8px; }
.dash { padding-right: 23px; }
.ctr { text-align: center; padding-top: 0; }
.b { font-weight: 700; color: #111; }
.bi { font-weight: 700; font-style: italic; color: #111; }
.yellow { background: #ffee00; }
.tt { border-top: 2px solid #111; line-height: 18px; }
.tb { border-bottom: 2px solid #111; }
.gb { border-bottom-color: #a5a5a5; }
.tl { border-left: 2px solid #111; }
.tr { border-right: 2px solid #111; }
.sel { border: none; box-shadow: inset 0 0 0 2px #1f6e45; overflow: visible; z-index: 1; }
.sel::after { content: ""; position: absolute; right: -2px; bottom: -2px; width: 5px; height: 5px; background: #1f6e45; border: 1px solid #fff; box-sizing: border-box; }

.vscroll { flex: 1; background: #dcdcdc; display: flex; flex-direction: column; align-items: center; padding: 3px 0 0; }
.sbtn { width: 13px; height: 12px; background: #fff; border: 1px solid #c4c4c4; display: flex; align-items: center; justify-content: center; flex: none; }
.thumb { width: 13px; height: 143px; margin-top: 272px; margin-bottom: 2px; background: #fff; border: 1px solid #bdbdbd; flex: none; }

/* sheet tabs */
.sheettabs { height: 28px; box-sizing: border-box; background: #e6e6e6; border-top: 2px solid #c5c5c5; display: flex; align-items: flex-start; flex: none; font-size: 12.300px; color: #5c5c5c; }
.navarrows { width: 96px; height: 17px; margin-top: 5px; display: flex; align-items: center; padding-left: 28px; gap: 23px; box-sizing: border-box; border-right: 1px solid #b8b8b8; }
.stab { height: 22px; display: flex; align-items: center; justify-content: center; box-sizing: border-box; white-space: nowrap; position: relative; }
.stab::after { content: ""; position: absolute; right: 0; top: 5px; height: 17px; width: 1px; background: #b8b8b8; }
.tw-a { width: 98px; } .tw-b { width: 114px; } .tw-c { width: 92px; } .tw-d { width: 101px; } .tw-e { width: 88px; }
.stab.on { background: #fff; color: #1f6e45; font-weight: 700; border-bottom: 2px solid #1f6e45; height: 22px; }
.stab.on::after, .stab.tw-b::after { display: none; }
.stab-more { width: 46px; height: 22px; display: flex; align-items: center; padding-left: 13px; box-sizing: border-box; gap: 6px; }
.stab-more b { color: #1f6e45; letter-spacing: .5px; }
.plus { margin-left: 5px; margin-top: 3px; }
.tdots { width: 40px; text-align: center; color: #a8a8a8; line-height: 22px; }
.hscroll { margin-left: -4px; flex: none; width: 474px; height: 13px; margin-top: 4px; display: flex; background: #d8d8d8; }
.hbtn { width: 13px; height: 13px; background: #fff; border: 1px solid #c4c4c4; display: flex; align-items: center; justify-content: center; box-sizing: border-box; flex: none; }
.hthumb { width: 419px; background: #fff; border: 1px solid #c4c4c4; box-sizing: border-box; flex: none; }
.hr { margin-left: auto; }

/* status */
.status { height: 19px; background: #f3f3f3; display: flex; align-items: center; padding-left: 1004px; flex: none; color: #222; font-size: 11.500px; }
.sv { width: 37px; height: 19px; display: flex; align-items: center; justify-content: center; flex: none; }
.sv.on { background: #d9d9d9; }
.zoomm { margin-left: 5px; }
.slider { width: 93px; height: 1px; background: #333; margin-left: 5px; position: relative; }
.slider i { position: absolute; left: 47px; top: -5px; width: 4px; height: 11px; background: #333; }
.zoomp { margin-left: 4px; }
.zoomv { margin-left: 18px; white-space: nowrap; }

/* taskbar */
.taskbar { height: 38px; background: #000; display: flex; align-items: stretch; flex: none; position: relative; }
.winlogo { margin: 12px 15px 0 16px; flex: none; }
.search { width: 323px; background: #1b1b1b; color: #363636; font-size: 13.500px; padding-left: 12px; padding-top: 11px; box-sizing: border-box; flex: none; }
.tslot { display: flex; align-items: flex-end; justify-content: center; padding-bottom: 6px; box-sizing: border-box; flex: none; opacity: .72; }
.tslot.run { border-bottom: 2px solid #75a9dc; }
.tslot.hot { background: #1d1d1d; }
.tray { flex: 1; display: flex; align-items: center; justify-content: flex-end; padding-right: 17px; gap: 8px; padding-top: 8px; }
.clock { display: flex; flex-direction: column; align-items: flex-end; font-size: 10.800px; color: #8f8f8f; margin-left: 3px; line-height: 16px; margin-top: -1px; }
.clock span:first-child { color: #5d5d5d; }

/* player */
.pausebox { position: absolute; left: 15px; top: 659px; width: 81px; height: 41px; background: rgba(18,18,18,.9); border-radius: 6px; display: flex; justify-content: center; gap: 7px; padding-top: 12px; box-sizing: border-box; }
.pausebox i { width: 8px; height: 25px; background: #fff; }
.player { position: absolute; left: 108px; top: 669px; width: 1165px; height: 40px; border-radius: 4px; overflow: hidden; background: rgba(60,60,60,.2); }
.player-top { height: 27px; background: rgba(10,10,10,.84); }
.track { position: absolute; left: 14px; top: 13px; width: 1034px; height: 14px; box-sizing: border-box; border: 1px solid #777; background: #000; display: flex; }
.played { width: 635px; background: #00adef; }
.buffered { width: 16px; background: #6e6e6e; }
.tip { position: absolute; left: 734px; top: 656px; width: 48px; height: 23px; background: #fff; color: #222; font: 13px/23px Roboto, sans-serif; text-align: center; letter-spacing: .8px; }
.tip::after { content: ""; position: absolute; left: 20px; bottom: -3px; border-left: 4px solid transparent; border-right: 4px solid transparent; border-top: 4px solid #fff; }
.signal { position: absolute; left: 1171px; top: 681px; height: 15px; display: flex; align-items: flex-end; gap: 2px; }
.signal i { width: 4px; background: #00adef; }
.p-gear { position: absolute; left: 1212px; top: 678px; }
.p-full { position: absolute; left: 1245px; top: 681px; }
.cursor { position: absolute; left: 683px; top: 107px; }
</style>

<style>
html, body { margin: 0; overflow: hidden; background: #e6e6e6; }
</style>
